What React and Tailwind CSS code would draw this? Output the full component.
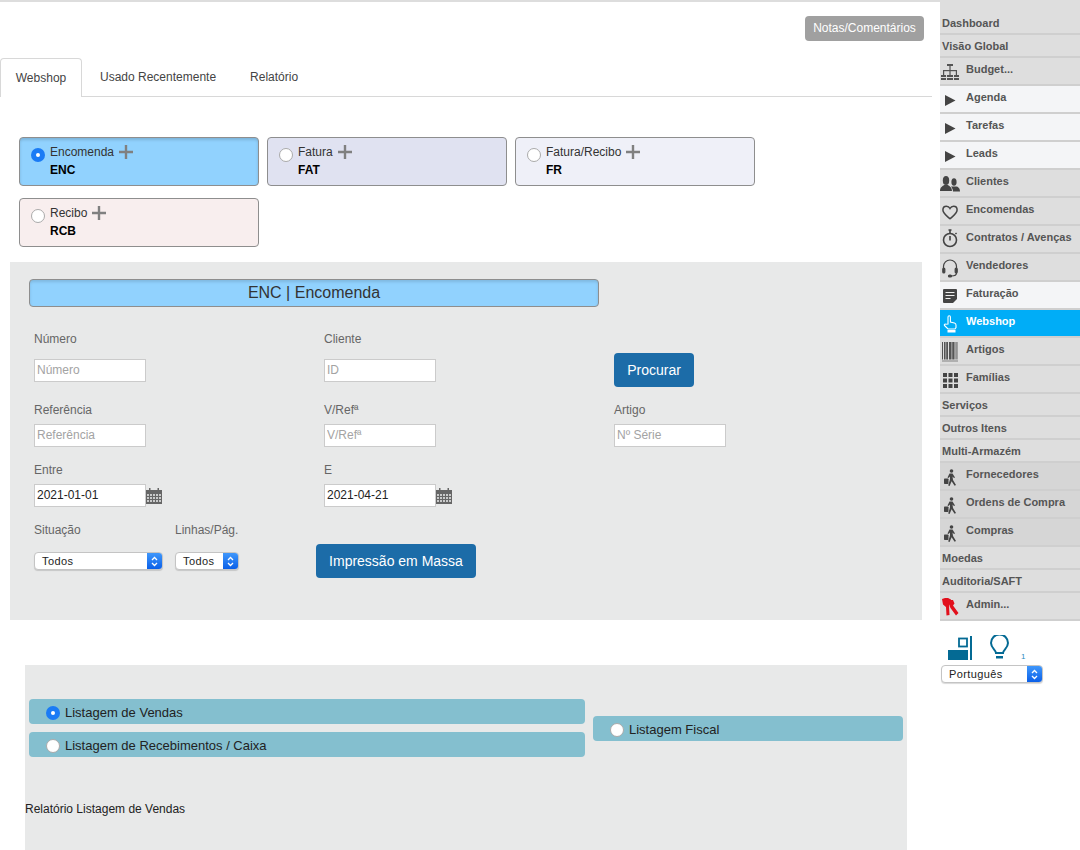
import React from "react";

const FONT = { fontFamily: '"Liberation Sans", Arial, sans-serif' };

// ---- small drawings ----
const Play = () => (
  <svg width="12" height="13" viewBox="0 0 12 13"><path d="M1 1 11.500 6.500 1 12Z" fill="#444" /></svg>
);
const Budget = () => (
  <svg width="18" height="17" viewBox="0 0 18 17" fill="#555">
    <rect x="6" y="0" width="6" height="2" />
    <rect x="8.400" y="2" width="1.200" height="4" />
    <rect x="2" y="6" width="14" height="1.200" />
    <rect x="2" y="7" width="1.200" height="4" />
    <rect x="8.400" y="7" width="1.200" height="4" />
    <rect x="14.800" y="7" width="1.200" height="4" />
    <rect x="0" y="11" width="18" height="2" />
    <rect x="0" y="14" width="18" height="2" />
    <path d="M5 11h1v5H5zM12 11h1v5h-1z" fill="#ddd" />
  </svg>
);
const People = () => (
  <svg width="20" height="16" viewBox="0 0 20 16" fill="#444">
    <ellipse cx="6" cy="4.500" rx="3.200" ry="4.500" />
    <path d="M0 15c0-4 3-5 4-6h4c1 1 4 2 4 6z" />
    <ellipse cx="14" cy="6" rx="2.600" ry="3.800" />
    <path d="M11 10.500h6c1 .7 3 1.500 3 5h-7c0-2-1-4-2-5z" />
  </svg>
);
const Heart = () => (
  <svg width="16" height="15" viewBox="0 0 16 15" fill="none" stroke="#444" strokeWidth="1.500">
    <path d="M8 13.800C5 11 1 8.500.9 5 .9 2.800 2.500 1.300 4.400 1.300 6 1.300 7.300 2.200 8 3.500 8.700 2.200 10 1.300 11.600 1.300 13.500 1.300 15.100 2.800 15.100 5 15 8.500 11 11 8 13.800Z" />
  </svg>
);
const Timer = () => (
  <svg className="-translate-y-[2px]" width="16" height="19" viewBox="0 0 16 19" fill="none" stroke="#444" strokeWidth="1.600">
    <circle cx="8" cy="11" r="6.500" />
    <path d="M8 7v4.500M6.500 1h3M8 1v3M13.500 4l1 1" />
  </svg>
);
const Headset = () => (
  <svg width="16" height="19" viewBox="0 0 16 19" fill="none" stroke="#444" strokeWidth="1.200">
    <path d="M1.500 9V7.500a6.500 6.500 0 0 1 13 0V9" />
    <rect x=".8" y="9" width="2" height="5" rx="1" fill="#444" />
    <rect x="13.200" y="9" width="2" height="5" rx="1" fill="#444" />
    <path d="M14.500 14c0 2-2 3-5 3" />
    <rect x="6.500" y="16" width="3" height="2" rx="1" fill="#444" />
  </svg>
);
const Note = () => (
  <svg width="14" height="14" viewBox="0 0 14 14">
    <path d="M1 0h12a1 1 0 0 1 1 1v9l-4 4H1a1 1 0 0 1-1-1V1a1 1 0 0 1 1-1Z" fill="#444" />
    <path d="M2.500 3.500h9M2.500 6.500h9M2.500 9.500h5" stroke="#eee" strokeWidth="1.200" />
  </svg>
);
const Hand = () => (
  <svg width="14" height="18" viewBox="0 0 14 18" fill="none" stroke="#fff" strokeWidth="1.100">
    <path d="M5 9V2a1.200 1.200 0 0 1 2.400 0v5l4 1c1 .3 1.600 1 1.600 2v2.500L12 14H5L1.500 10.500c-.7-.8.300-2 1.300-1.300Z" />
    <rect x="4.500" y="15" width="8" height="2.500" fill="#fff" stroke="none" />
  </svg>
);
const Barcode = () => (
  <svg width="16" height="20" viewBox="0 0 16 20" fill="#444">
    {[0, 2, 3.500, 5, 7, 8, 9.500, 11, 12.500, 14.500].map((x) => (
      <rect key={x} x={x} y="0" width={x === 3.500 || x === 9.500 ? 1.200 : 0.9} height="17.500" />
    ))}
    <path d="M0 18.500h16v1H0z" opacity=".6" />
  </svg>
);
const GridIcon = () => (
  <svg width="15" height="15" viewBox="0 0 15 15" fill="#444">
    {[0, 5.500, 11].map((x) =>
      [0, 5.500, 11].map((y) => <rect key={`${x}-${y}`} x={x} y={y} width="4" height="4" />)
    )}
  </svg>
);
const Walker = () => (
  <svg width="13" height="17" viewBox="0 0 13 17" fill="#444">
    <circle cx="7.500" cy="2" r="1.800" />
    <path d="M5.500 4.500h3l2.500 4-1 .6-1.500-1.600L9 11l3 5-1.400.8-3-4.500-2 4.700L4.200 16.500 6 10.500V7.500L4.500 9 3.500 8.500Z" />
    <rect x="0" y="9.500" width="4.500" height="5.500" rx=".7" />
  </svg>
);
const Key = () => (
  <svg width="17" height="18" viewBox="0 0 17 18" fill="#e2101c">
    <path d="M0 1 3 0 6 0 9 1.500 8.500 6 7 7.500 7.500 17 4.500 17.500 4 9 1 6.500Z" />
    <path d="M8 2h3l1.500 3.500L11 7.500l5.500 7.500-2.500 2.500L8.500 10 7.500 8Z" />
  </svg>
);
const Plus = () => (
  <svg width="14" height="14" viewBox="0 0 14 14" fill="#808080"><path d="M5.800 0h2.400v5.800H14v2.400H8.200V14H5.800V8.200H0V5.800h5.800Z" /></svg>
);
const Calendar = () => (
  <svg width="16" height="16" viewBox="0 0 16 16">
    <path d="M0 2h16v14H0z" fill="#666" />
    <path d="M3 0h1.500v2H3zM11.500 0H13v2h-1.500z" fill="#666" />
    <g fill="#c9caca">
      {[1, 4, 7, 10, 13].map((x) =>
        [6, 9, 12].map((y) => <rect key={`${x}-${y}`} x={x} y={y} width="2" height="2" />)
      )}
    </g>
  </svg>
);

const Radio = ({ checked, className = "" }) =>
  checked ? (
    <span className={`flex h-[14px] w-[14px] shrink-0 items-center justify-center rounded-full bg-[#1a7bf5] ${className}`}>
      <span className="h-[4px] w-[4px] rounded-full bg-white" />
    </span>
  ) : (
    <span className={`h-[14px] w-[14px] shrink-0 rounded-full border border-[#aaa] bg-white ${className}`} />
  );

const MacSelect = ({ label, width }) => (
  <div className={`flex h-[18px] ${width} items-stretch overflow-hidden rounded-[4px] border border-[#c4c4c4] bg-white shadow-[0_1px_1px_rgba(0,0,0,0.15)]`}>
    <span className="flex-1 truncate pl-[7px] text-[11px] leading-[16px] tracking-[0.4px] text-[#222]">{label}</span>
    <span className="flex w-[15px] items-center justify-center bg-gradient-to-b from-[#3f97fb] to-[#0a5fe8]">
      <svg width="7" height="11" viewBox="0 0 7 11" fill="none" stroke="#fff" strokeWidth="1.300">
        <path d="M1 4 3.500 1.500 6 4M1 7l2.500 2.500L6 7" />
      </svg>
    </span>
  </div>
);

const Field = ({ label, placeholder, value, gap = "mt-[5px]", icon }) => (
  <div>
    <div className="h-[18px] text-[12px] leading-[18px] text-[#666]">{label}</div>
    <div className={`flex items-center ${gap}`}>
      <input
        readOnly
        placeholder={placeholder}
        value={value}
        className="h-[23px] w-[112px] border border-[#cbcbcb] bg-white px-[2px] pb-[1px] text-[12px] text-[#222] outline-none placeholder:text-[#a3a3a3]"
      />
      {icon}
    </div>
  </div>
);

const menu = [
  { label: "Dashboard", first: true },
  { label: "Visão Global" },
  { label: "Budget...", icon: <Budget />, tall: true },
  { label: "Agenda", icon: <Play />, tall: true, tone: "light" },
  { label: "Tarefas", icon: <Play />, tall: true, tone: "light" },
  { label: "Leads", icon: <Play />, tall: true, tone: "light" },
  { label: "Clientes", icon: <People />, tall: true },
  { label: "Encomendas", icon: <Heart />, tall: true },
  { label: "Contratos / Avenças", icon: <Timer />, tall: true },
  { label: "Vendedores", icon: <Headset />, tall: true },
  { label: "Faturação", icon: <Note />, tall: true, tone: "light" },
  { label: "Webshop", icon: <Hand />, tall: true, tone: "active" },
  { label: "Artigos", icon: <Barcode />, tall: true },
  { label: "Famílias", icon: <GridIcon />, tall: true },
  { label: "Serviços" },
  { label: "Outros Itens" },
  { label: "Multi-Armazém" },
  { label: "Fornecedores", icon: <Walker />, tall: true, tone: "dark" },
  { label: "Ordens de Compra", icon: <Walker />, tall: true, tone: "dark" },
  { label: "Compras", icon: <Walker />, tall: true, tone: "dark" },
  { label: "Moedas" },
  { label: "Auditoria/SAFT" },
  { label: "Admin...", icon: <Key />, tall: true },
];

const toneClass = {
  light: "bg-[#f4f5f7] text-[#555]",
  active: "bg-[#00adf7] text-white",
  dark: "bg-[#d6d6d6] text-[#555]",
  base: "bg-[#dedede] text-[#555]",
};

const MenuRow = ({ item }) => {
  const tone = toneClass[item.tone || "base"];
  if (!item.tall) {
    return (
      <div className={`${item.first ? "h-[35px] pt-[12px]" : "h-[23px]"} border-b-2 border-[#cfcfcf] ${tone} pl-[2px] text-[11px] font-bold leading-[23px]`}>
        {item.label}
      </div>
    );
  }
  return (
    <div className={`flex h-[28px] border-b-2 border-[#cfcfcf] ${tone} text-[11px] font-bold`}>
      <span className="mr-[6px] flex w-[20px] shrink-0 items-center justify-center pt-[2px]">{item.icon}</span>
      <span className="leading-[22px]">{item.label}</span>
    </div>
  );
};

const docTypes = [
  { label: "Encomenda", code: "ENC", bg: "bg-[#91d2fe]", checked: true },
  { label: "Fatura", code: "FAT", bg: "bg-[#e0e2f1]" },
  { label: "Fatura/Recibo", code: "FR", bg: "bg-[#eff0f8]" },
  { label: "Recibo", code: "RCB", bg: "bg-[#f8eeee]" },
];

const Listing = ({ label, checked }) => (
  <div className="flex h-[25px] items-center gap-[5px] rounded-[4px] bg-[#84bfcf] pl-[17px] text-[13px] text-[#222]">
    <Radio checked={checked} className="mt-[2px]" /> <span className="pt-[2px]">{label}</span>
  </div>
);

export default function App() {
  return (
    <div className="flex h-[850px] w-[1080px] overflow-hidden bg-white" style={FONT}>
      {/* AREA PRINCIPAL */}
      <main className="w-[940px] shrink-0 border-t-2 border-[#dddddd]">
        <div className="flex h-[56px] justify-end pr-[16px] pt-[14px]">
          <button className="h-[25px] w-[119px] rounded-[4px] bg-[#a0a0a0] pb-[1px] text-[12px] text-white">Notas/Comentários</button>
        </div>

        {/* TABS */}
        <div className="flex h-[39px] w-[932px] border-b border-[#d8d8d8] text-[12px] text-[#444]">
          <div className="-mb-px flex h-[39px] w-[82px] items-center justify-center rounded-t-[4px] border border-b-0 border-[#d8d8d8] bg-white">Webshop</div>
          <div className="ml-[18px] flex items-center">Usado Recentemente</div>
          <div className="ml-[34px] flex items-center">Relatório</div>
        </div>

        {/* TIPOS DE DOCUMENTO */}
        <div className="ml-[19px] mt-[40px] flex w-[740px] flex-wrap gap-x-[8px] gap-y-[12px]">
          {docTypes.map((d) => (
            <div key={d.code} className={`flex h-[49px] w-[240px] rounded-[4px] border border-[#8e8e8e] pl-[11px] pt-[10px] ${d.bg} ${d.checked ? "shadow-[inset_0_2px_3px_rgba(0,0,0,0.15)]" : ""}`}>
              <Radio checked={d.checked} />
              <div className="ml-[5px]">
                <div className="-mt-[5px] flex h-[18px] items-center gap-[5px] text-[12px] text-[#333]">
                  {d.label} <Plus />
                </div>
                <div className="text-[12px] font-bold leading-[18px] text-black">{d.code}</div>
              </div>
            </div>
          ))}
        </div>

        {/* PESQUISA */}
        <section className="ml-[10px] mt-[15px] h-[358px] w-[912px] bg-[#e8e9e9] pl-[19px] pt-[17px]">
          <div className="flex h-[28px] w-[570px] items-center justify-center rounded-[4px] border border-[#8e8e8e] bg-[#91d2fe] text-[16px] text-[#333] shadow-[inset_0_2px_3px_rgba(0,0,0,0.12)]">
            ENC | Encomenda
          </div>

          <div className="ml-[5px] mt-[23px] grid grid-cols-[290px_290px_1fr]">
            <Field label="Número" placeholder="Número" gap="mt-[11px]" />
            <Field label="Cliente" placeholder="ID" gap="mt-[11px]" />
            <button className="mt-[23px] h-[34px] w-[80px] rounded-[4px] bg-[#1c6ca8] text-[14px] text-white">Procurar</button>
          </div>

          <div className="ml-[5px] mt-[14px] grid grid-cols-[290px_290px_1fr]">
            <Field label="Referência" placeholder="Referência" />
            <Field label="V/Refª" placeholder="V/Refª" />
            <Field label="Artigo" placeholder="Nº Série" />
          </div>

          <div className="ml-[5px] mt-[14px] grid grid-cols-[290px_290px_1fr]">
            <Field label="Entre" value="2021-01-01" icon={<Calendar />} />
            <Field label="E" value="2021-04-21" icon={<Calendar />} />
          </div>

          <div className="ml-[5px] mt-[14px] flex">
            <div className="w-[141px]">
              <div className="h-[18px] text-[12px] leading-[18px] text-[#666]">Situação</div>
              <div className="mt-[13px]"><MacSelect label="Todos" width="w-[129px]" /></div>
            </div>
            <div className="w-[141px]">
              <div className="h-[18px] text-[12px] leading-[18px] text-[#666]">Linhas/Pág.</div>
              <div className="mt-[13px]"><MacSelect label="Todos" width="w-[64px]" /></div>
            </div>
            <button className="mt-[23px] h-[34px] w-[160px] rounded-[4px] bg-[#1c6ca8] text-[14px] text-white">Impressão em Massa</button>
          </div>
        </section>

        {/* LISTAGENS */}
        <section className="ml-[25px] mt-[45px] h-[185px] w-[882px] bg-[#e8e9e9] pt-[34px]">
          <div className="flex items-center gap-[8px] pl-[4px]">
            <div className="flex w-[556px] flex-col gap-[8px]">
              <Listing label="Listagem de Vendas" checked />
              <Listing label="Listagem de Recebimentos / Caixa" />
            </div>
            <div className="mt-[1px] w-[310px]">
              <Listing label="Listagem Fiscal" />
            </div>
          </div>
          <p className="mt-[43px] text-[12px] leading-[18px] text-[#222]">Relatório Listagem de Vendas</p>
        </section>
      </main>

      {/* MENU LATERAL */}
      <aside className="w-[140px] shrink-0">
        {menu.map((item) => (
          <MenuRow key={item.label} item={item} />
        ))}
        <div className="flex h-[39px] items-end">
          <svg className="ml-[8px]" width="24" height="24" viewBox="0 0 24 24" fill="#046a94">
            <rect x="0" y="14" width="20" height="10" />
            <rect x="11" y="2.500" width="8" height="8" fill="none" stroke="#046a94" strokeWidth="1.800" />
            <rect x="22" y="0" width="2" height="24" />
          </svg>
          <svg className="ml-[18px]" width="19" height="25" viewBox="0 0 19 25" fill="none" stroke="#046a94" strokeWidth="2">
            <path d="M6 18c0-3-5-5-5-10a8.500 8.500 0 0 1 17 0c0 5-5 7-5 10Z" />
            <path d="M6 21h7v2.500H6z" fill="#046a94" stroke="none" />
          </svg>
          <span className="-mb-[2px] ml-[12px] text-[8px] leading-[10px] text-[#2a8fbf]">1</span>
        </div>
        <div className="ml-[1px] mt-[5px]"><MacSelect label="Português" width="w-[102px]" /></div>
      </aside>
    </div>
  );
}
